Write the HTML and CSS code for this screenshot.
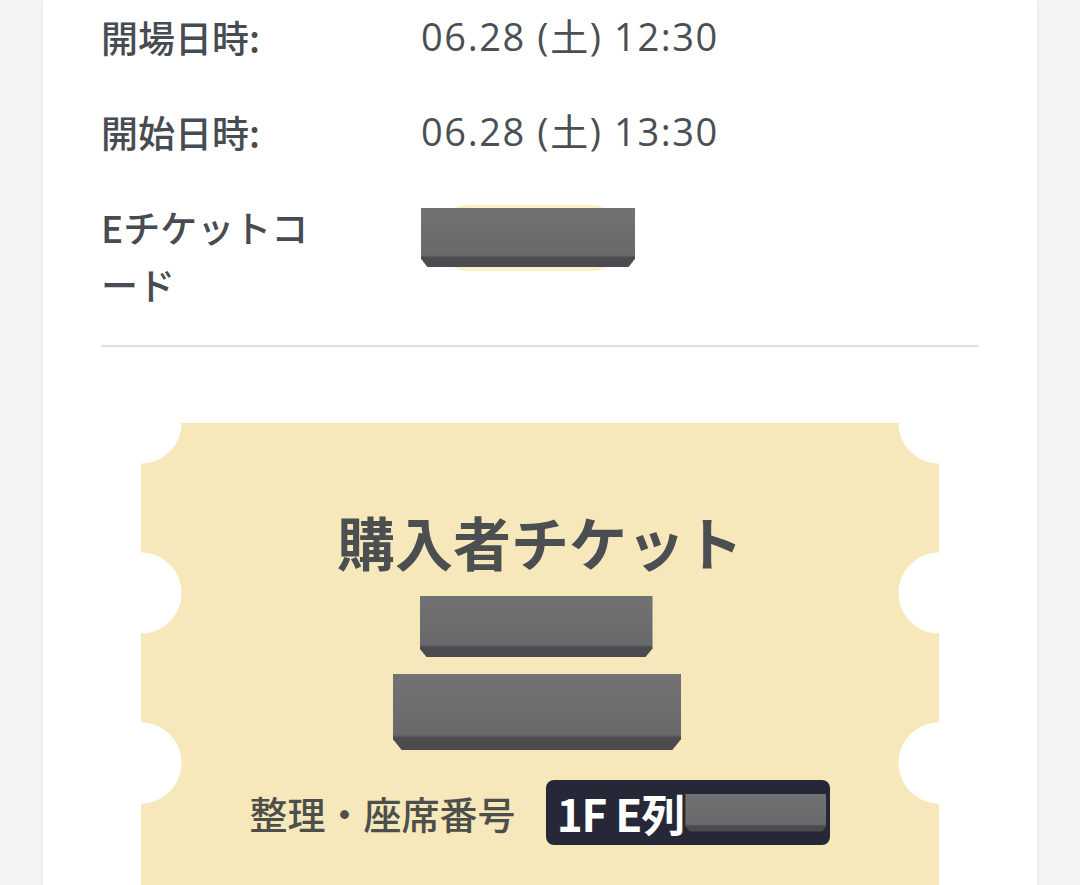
FILE: index.html
```html
<!DOCTYPE html>
<html lang="ja">
<head>
  <meta charset="UTF-8" />
  <meta name="viewport" content="width=device-width, initial-scale=1.0"/>
  <title>チケット詳細</title>
  <link rel="stylesheet" href="styles.css">
</head>
<body>
  <div class="card">
    <div class="info">
      <div class="row">
        <div class="label">開場日時:</div>
        <div class="value">06.28 (土) 12:30</div>
      </div>
      <div class="row">
        <div class="label">開始日時:</div>
        <div class="value">06.28 (土) 13:30</div>
      </div>
      <div class="row">
        <div class="label">Eチケットコード</div>
        <div class="value">
          <span class="code-mark"><span class="redact code-box"></span></span>
        </div>
      </div>
    </div>

    <hr class="divider">

    <div class="ticket">
      <h2 class="ticket-title">購入者チケット</h2>
      <div class="redact box-small"></div>
      <div class="redact box-large"></div>
      <div class="seat">
        <span class="seat-label">整理・座席番号</span>
        <span class="seat-badge">1F E列<span class="redact seat-box"></span></span>
      </div>
    </div>
  </div>
</body>
</html>
```

FILE: styles.css
```css
body {
  margin: 0;
  background-color: #f4f4f4;
  font-family: "Noto Sans CJK JP", "Noto Sans", sans-serif;
  color: #4a4f55;
  overflow: hidden;
}
.card {
  margin: 0 43px;
  background-color: #fff;
  box-shadow: 0 0 6px rgba(0, 0, 0, 0.06);
  padding: 9px 58px 60px 58px;
  min-height: 900px;
}
.info {
  display: flex;
  flex-direction: column;
  gap: 38px;
}
.row {
  display: flex;
  align-items: flex-start;
}
.label {
  width: 224px;
  margin-right: 96px;
  font-size: 37px;
  line-height: 57px;
  font-weight: 500;
  color: #474c52;
}
.value {
  font-family: "Open Sans", "Noto Sans CJK JP", sans-serif;
  font-size: 38px;
  line-height: 55px;
  font-weight: 400;
  letter-spacing: 1.6px;
}
.code-mark {
  display: inline-block;
  margin: 6px 0 0 22px;
  height: 66px;
  width: 174px;
  background-color: #fbefc6;
  border-radius: 24px;
  position: relative;
}
.code-mark .code-box {
  position: absolute;
  left: -22px;
  top: 3px;
  width: 214px;
  height: 59px;
}
.redact {
  display: block;
  background: linear-gradient(to bottom, #727274 0, #69696b 80%, #4b4b50 84%, #4b4b50 100%);
  clip-path: polygon(0 0, 100% 0, 100% 86%, 97% 100%, 3% 100%, 0 86%);
}
.divider {
  border: none;
  border-top: 2px solid #dfe1e1;
  margin: 32px 0 0 0;
}
.ticket {
  margin: 76px 40px 0 40px;
  padding: 84px 0 40px 0;
  min-height: 500px;
  background-color: #f6e8bb;
  background-image:
    radial-gradient(circle at 0 0, #fff 40px, transparent 41px),
    radial-gradient(circle at 100% 0, #fff 40px, transparent 41px),
    radial-gradient(circle at 0 100%, #fff 40px, transparent 41px),
    radial-gradient(circle at 100% 100%, #fff 40px, transparent 41px);
  background-size: 100% 170px;
  background-repeat: repeat-y;
  display: flex;
  flex-direction: column;
  align-items: center;
}
.ticket-title {
  margin: 0;
  font-size: 58px;
  line-height: 68px;
  font-weight: 700;
  color: #4b4f51;
}
.box-small {
  width: 233px;
  height: 61px;
  margin-top: 21px;
  margin-right: 8px;
}
.box-large {
  width: 288px;
  height: 76px;
  margin-top: 17px;
  margin-right: 6px;
}
.seat {
  display: flex;
  align-items: center;
  gap: 30px;
  margin-top: 30px;
}
.seat-label {
  font-size: 38px;
  font-weight: 500;
  color: #4d4f4a;
}
.seat-badge {
  display: flex;
  align-items: center;
  background-color: #262838;
  color: #fff;
  border-radius: 8px;
  height: 65px;
  padding: 0 4px 0 11px;
  font-size: 44px;
  font-weight: 700;
  letter-spacing: -1px;
}
.seat-box {
  width: 141px;
  height: 38px;
  margin-left: 1px;
}
```
